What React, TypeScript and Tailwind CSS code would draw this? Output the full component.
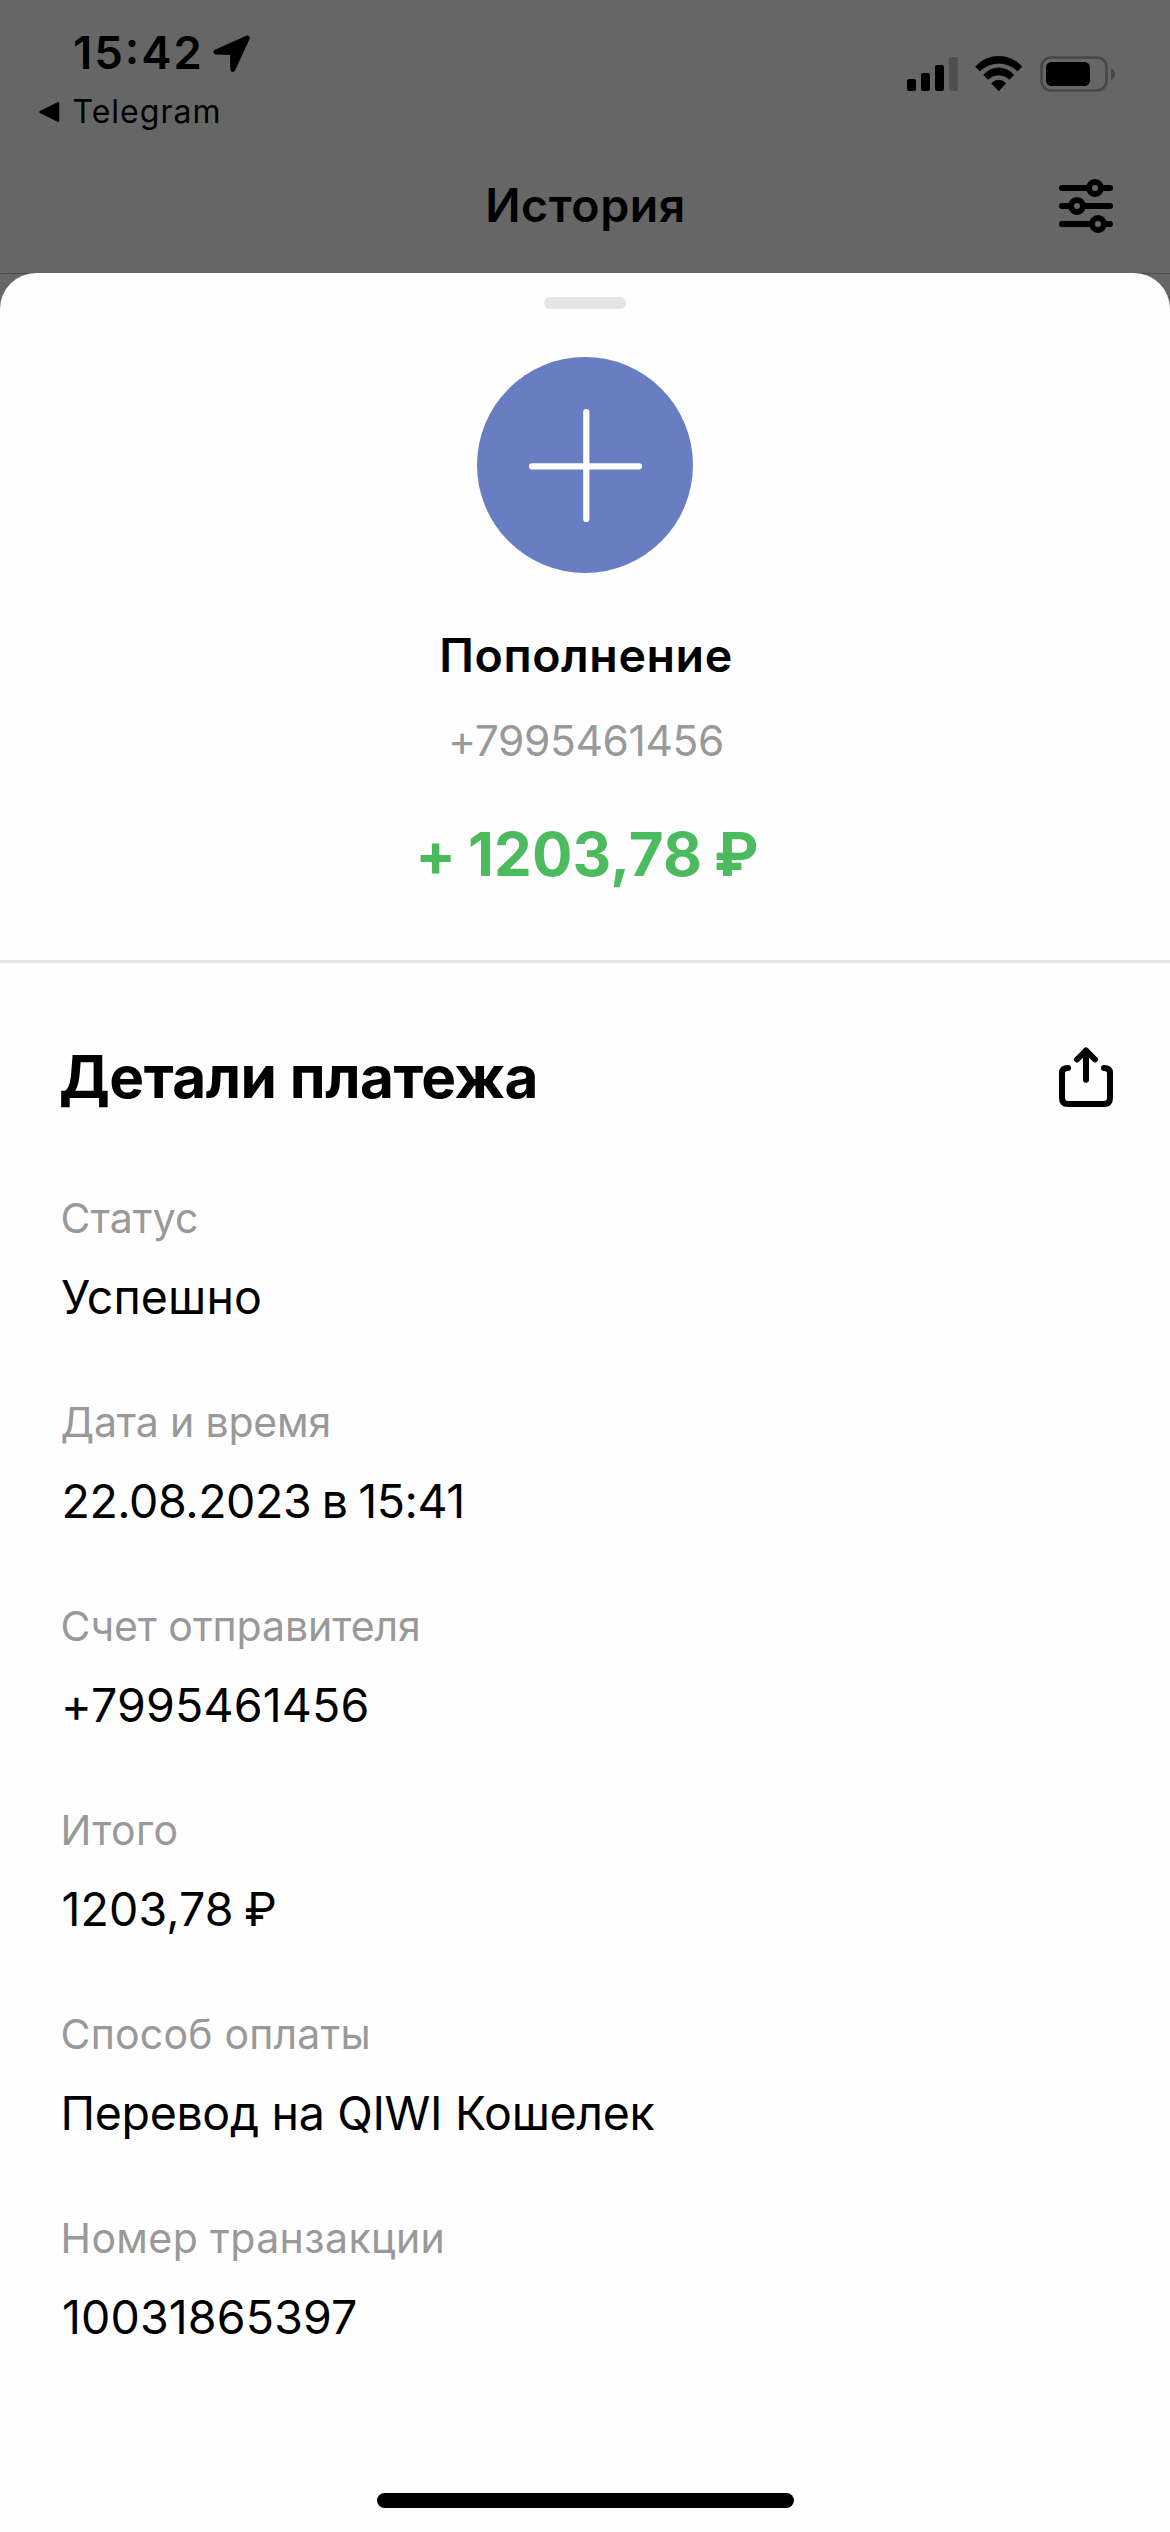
function LocationArrow() {
  return (
    <svg className="mt-[11px] ml-[9px]" width="38" height="38" viewBox="0 0 38 38">
      <path
        d="M34.3 3 3 17 19.5 17.6 19.8 34.5Z"
        fill="#000"
        stroke="#000"
        strokeWidth="5"
        strokeLinejoin="round"
      />
    </svg>
  );
}

function BackTriangle() {
  return (
    <svg className="mr-[12.5px]" width="21" height="22" viewBox="0 0 21 22">
      <path d="M1.5 11 19 2.2V19.8Z" fill="#000" stroke="#000" strokeWidth="2.4" strokeLinejoin="round" />
    </svg>
  );
}

function Signal() {
  return (
    <svg width="51" height="35" viewBox="0 0 51 35">
      <rect x="0" y="23" width="9" height="12" rx="2" />
      <rect x="14" y="17" width="9" height="18" rx="2" />
      <rect x="28" y="9" width="9" height="26" rx="2" />
      <rect x="42" y="1" width="9" height="34" rx="2" fill="#4f4f4f" />
    </svg>
  );
}

function Wifi() {
  return (
    <svg className="ml-[17px]" width="48" height="36" viewBox="0 0 48 36">
      <g stroke="#000" strokeWidth="0.8" strokeLinejoin="round">
        <path d="M.6 10.6A31 31 0 0 1 46.8 10.6L42.5 15A26.5 26.5 0 0 0 4.9 15Z" />
        <path d="M8.7 19A19.5 19.5 0 0 1 38.7 19L34.4 23.2A15.5 15.5 0 0 0 13 23.2Z" />
        <path d="M16.7 27.4A9.5 9.5 0 0 1 30.7 27.4L23.7 34.8Z" />
      </g>
    </svg>
  );
}

function Battery() {
  return (
    <svg className="ml-[17px]" width="75" height="36" viewBox="0 0 75 36">
      <rect x="1.5" y="1.5" width="65" height="33" rx="9.5" fill="none" stroke="#484848" strokeWidth="2.6" />
      <rect x="6" y="6" width="44" height="24" rx="5.5" />
      <path d="M71 12c2.600 1 4 3.400 4 6s-1.400 5-4 6Z" fill="#484848" />
    </svg>
  );
}

function Sliders() {
  return (
    <svg className="mt-px justify-self-end" width="54" height="54" viewBox="0 0 54 54">
      <g stroke="#000" strokeWidth="6" strokeLinecap="round" fill="#666">
        <path d="M3 9H51M3 27H51M3 45H51" />
        <circle cx="36" cy="9" r="6" />
        <circle cx="18" cy="27" r="6" />
        <circle cx="39" cy="45" r="6" />
      </g>
    </svg>
  );
}

function Share() {
  return (
    <svg className="mt-[6px]" width="54" height="60" viewBox="0 0 54 60">
      <g fill="none" stroke="#000" strokeWidth="6" strokeLinecap="round" strokeLinejoin="round">
        <path d="M9 21Q3 21 3 26V51Q3 57 9 57H45Q51 57 51 51V26Q51 21 45 21" />
        <path d="M27 3.500V32.700M18 12.500 27 3.500 36 12.500" />
      </g>
    </svg>
  );
}

const details = [
  { label: "Статус", value: "Успешно", labelClass: "tracking-[0.09px]", valueClass: "ml-[61px] tracking-[0.1px]" },
  {
    label: "Дата и время",
    value: "22.08.2023 в 15:41",
    labelClass: "tracking-[-0.16px]",
    valueClass: "ml-[61.5px] tracking-[-0.45px] [word-spacing:-2px] [font-feature-settings:'calt'_0]",
  },
  {
    label: "Счет отправителя",
    value: "+7995461456",
    labelClass: "tracking-[-0.06px]",
    valueClass: "ml-[61px] tracking-[0.19px]",
  },
  {
    label: "Итого",
    value: "1203,78 ₽",
    labelClass: "tracking-[0.33px]",
    valueClass: "ml-[61.5px] tracking-[0.1px] [word-spacing:-2.5px]",
  },
  {
    label: "Способ оплаты",
    value: "Перевод на QIWI Кошелек",
    labelClass: "tracking-[0.21px]",
    valueClass: "ml-[60.5px] tracking-[-0.33px]",
  },
  {
    label: "Номер транзакции",
    value: "10031865397",
    labelClass: "tracking-[0.41px]",
    valueClass: "ml-[62px] tracking-[0.13px]",
  },
];

export default function App() {
  return (
    <div className="flex h-[2532px] w-[1170px] flex-col overflow-hidden bg-[#666] font-['Inter',sans-serif] whitespace-nowrap text-black">
      <header className="h-[273px] shrink-0">
        <div className="flex h-[131px] justify-between pt-6 pr-[55px] pl-[39px]">
          <div>
            <div className="flex h-[57px] items-start pl-[34px]">
              <span className="text-[45.5px] leading-[57px] font-semibold tracking-[1.96px] [font-feature-settings:'case']">
                15:42
              </span>
              <LocationArrow />
            </div>
            <div className="mt-[11px] flex items-center">
              <BackTriangle />
              <span className="text-[32px] leading-[40px] tracking-[1.02px]">Telegram</span>
            </div>
          </div>
          <div className="flex items-start pt-[32px]">
            <Signal />
            <Wifi />
            <Battery />
          </div>
        </div>
        <div className="mt-[44px] grid grid-cols-[1fr_auto_1fr] items-center px-[57px]">
          <span />
          <h1 className="pl-px text-[46.5px] leading-[60px] font-semibold tracking-[0.55px]">История</h1>
          <Sliders />
        </div>
      </header>

      <div className="flex grow flex-col border-t border-[#4c4c4c]">
        <main className="-mt-px flex grow flex-col rounded-t-[36px] bg-[#fefefe]">
          <section className="flex flex-col items-center border-b-[3px] border-[#e6e6e6] pt-[24px] pb-[70px]">
            <div className="h-[12px] w-[82px] rounded-full bg-[#e5e5e5]" />
            <div className="mt-[48px] size-[216px] rounded-full bg-[#697ec2]">
              <svg width="216" height="216" viewBox="0 0 216 216">
                <path
                  d="M109.300 55V162M55 109.300H162"
                  stroke="#fff"
                  strokeWidth="6.2"
                  strokeLinecap="round"
                />
              </svg>
            </div>
            <h2 className="mt-[52px] pl-[2px] text-[46.5px] leading-[60px] font-semibold tracking-[0.61px]">
              Пополнение
            </h2>
            <p className="mt-[28px] pl-[2px] text-[42.5px] leading-[56px] tracking-[-0.37px] text-[#999]">
              +7995461456
            </p>
            <p className="mt-[49px] pl-[4px] text-[60px] leading-[72px] font-bold tracking-[0.15px] text-[#4bbb5d] [word-spacing:-2.5px]">
              + 1203,78 ₽
            </p>
          </section>

          <section className="pt-[78px]">
            <div className="flex items-start justify-between pr-[57px] pl-[59px]">
              <h2 className="text-[58.5px] leading-[72px] font-bold tracking-[-0.5px]">Детали платежа</h2>
              <Share />
            </div>
            <dl className="mt-[77px] flex flex-col gap-[65px]">
              {details.map((d) => (
                <div key={d.label}>
                  <dt className={`ml-[60.5px] text-[41px] leading-[56px] text-[#999] ${d.labelClass}`}>{d.label}</dt>
                  <dd className={`mt-[19px] text-[46.5px] leading-[64px] ${d.valueClass}`}>{d.value}</dd>
                </div>
              ))}
            </dl>
          </section>

          <div className="mt-auto mb-[24px] ml-[377px] h-[15px] w-[417px] rounded-full bg-black" />
        </main>
      </div>
    </div>
  );
}
